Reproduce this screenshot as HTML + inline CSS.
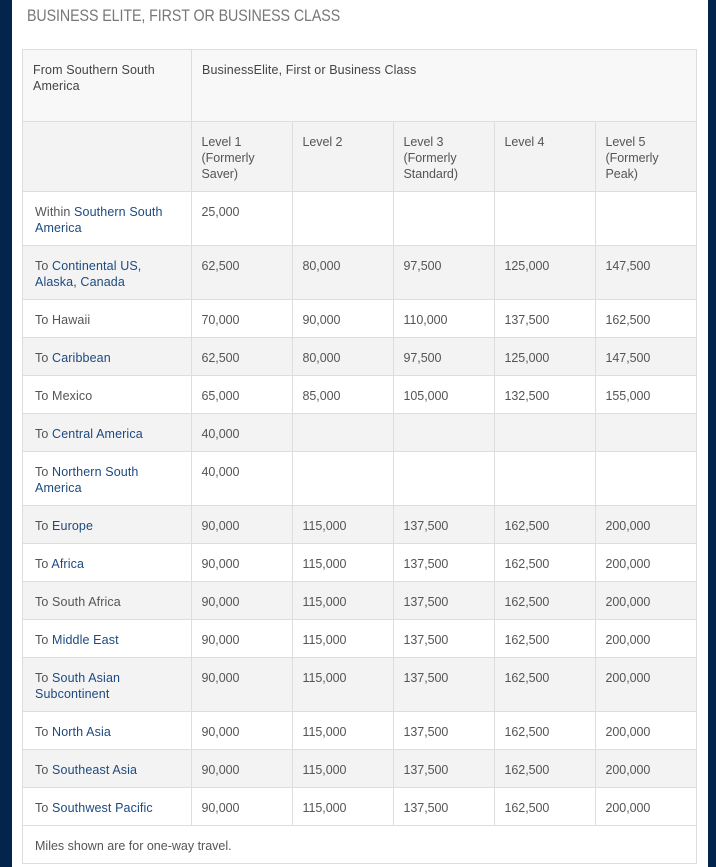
<!DOCTYPE html>
<html><head><meta charset="utf-8">
<style>
html,body{margin:0;padding:0;background:#fff;width:716px;height:867px;overflow:hidden}
body{position:relative;font-family:"Liberation Sans",sans-serif}
.nl{position:absolute;left:0;top:0;width:12px;height:867px;background:#03244d}
.nr{position:absolute;left:708px;top:0;width:8px;height:867px;background:#03244d}
h1{position:absolute;left:27px;top:7px;margin:0;font-weight:normal;font-size:17px;line-height:18px;color:#777;white-space:nowrap;letter-spacing:-.1px;transform-origin:0 0;transform:scaleX(.838)}
table{position:absolute;left:22px;top:49px;border-collapse:collapse;table-layout:fixed;width:674px;font-size:12.5px;line-height:16px;color:#555;letter-spacing:.12px}
td{border:1px solid #ddd;padding:12px 10px 0 9.5px;vertical-align:top;box-sizing:border-box;letter-spacing:-.05px}
td:first-child{padding-left:12px;letter-spacing:.12px}
tr.g td{background:#f3f3f3}
tr.h td{background:#f8f8f8;color:#444;padding-left:10px;letter-spacing:.12px}
tr.l td{background:#f3f3f3}
tr.l td:first-child{padding-left:10px}
b{font-weight:normal;color:#1c4a80}
.f td{height:38px;padding-left:12px;letter-spacing:0}
</style></head><body>
<div class="nl"></div><div class="nr"></div>
<h1>BUSINESS ELITE, FIRST OR BUSINESS CLASS</h1>
<table>
<colgroup><col style="width:169px"><col style="width:101px"><col style="width:101px"><col style="width:101px"><col style="width:101px"><col style="width:101px"></colgroup>
<tr class="h" style="height:72px"><td>From Southern South America</td><td colspan="5">BusinessElite, First or Business Class</td></tr>
<tr class="l" style="height:70px"><td></td><td>Level 1 (Formerly Saver)</td><td>Level 2</td><td>Level 3 (Formerly Standard)</td><td>Level 4</td><td>Level 5 (Formerly Peak)</td></tr>
<tr style="height:54px"><td>Within <b>Southern South America</b></td><td>25,000</td><td></td><td></td><td></td><td></td></tr>
<tr class="g" style="height:54px"><td>To <b>Continental US, Alaska, Canada</b></td><td>62,500</td><td>80,000</td><td>97,500</td><td>125,000</td><td>147,500</td></tr>
<tr style="height:38px"><td>To Hawaii</td><td>70,000</td><td>90,000</td><td>110,000</td><td>137,500</td><td>162,500</td></tr>
<tr class="g" style="height:38px"><td>To <b>Caribbean</b></td><td>62,500</td><td>80,000</td><td>97,500</td><td>125,000</td><td>147,500</td></tr>
<tr style="height:38px"><td>To Mexico</td><td>65,000</td><td>85,000</td><td>105,000</td><td>132,500</td><td>155,000</td></tr>
<tr class="g" style="height:38px"><td>To <b>Central America</b></td><td>40,000</td><td></td><td></td><td></td><td></td></tr>
<tr style="height:54px"><td>To <b>Northern South America</b></td><td>40,000</td><td></td><td></td><td></td><td></td></tr>
<tr class="g" style="height:38px"><td>To <b>Europe</b></td><td>90,000</td><td>115,000</td><td>137,500</td><td>162,500</td><td>200,000</td></tr>
<tr style="height:38px"><td>To <b>Africa</b></td><td>90,000</td><td>115,000</td><td>137,500</td><td>162,500</td><td>200,000</td></tr>
<tr class="g" style="height:38px"><td>To South Africa</td><td>90,000</td><td>115,000</td><td>137,500</td><td>162,500</td><td>200,000</td></tr>
<tr style="height:38px"><td>To <b>Middle East</b></td><td>90,000</td><td>115,000</td><td>137,500</td><td>162,500</td><td>200,000</td></tr>
<tr class="g" style="height:54px"><td>To <b>South Asian Subcontinent</b></td><td>90,000</td><td>115,000</td><td>137,500</td><td>162,500</td><td>200,000</td></tr>
<tr style="height:38px"><td>To <b>North Asia</b></td><td>90,000</td><td>115,000</td><td>137,500</td><td>162,500</td><td>200,000</td></tr>
<tr class="g" style="height:38px"><td>To <b>Southeast Asia</b></td><td>90,000</td><td>115,000</td><td>137,500</td><td>162,500</td><td>200,000</td></tr>
<tr style="height:38px"><td>To <b>Southwest Pacific</b></td><td>90,000</td><td>115,000</td><td>137,500</td><td>162,500</td><td>200,000</td></tr>
<tr class="f"><td colspan="6">Miles shown are for one-way travel.</td></tr>
</table>
</body></html>
